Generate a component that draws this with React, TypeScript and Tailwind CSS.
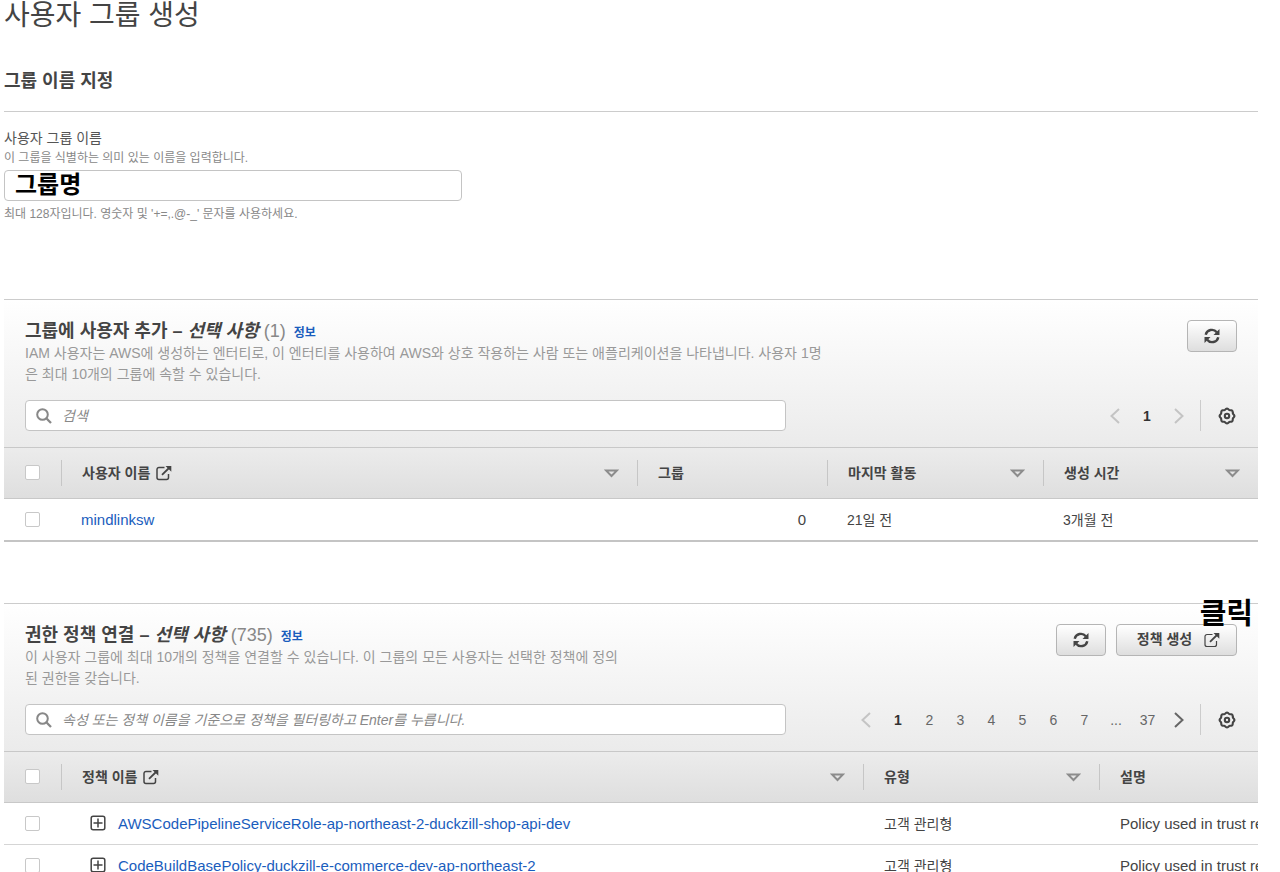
import React from "react";

const ICON = "block shrink-0";

function RefreshIcon() {
  return (
    <svg className={ICON} width="16" height="16" viewBox="0 0 16 16" fill="none" aria-hidden="true">
      <path d="M1.7 6.800A6.300 6.300 0 0 1 12.800 4.300" stroke="#444" strokeWidth="2.400" />
      <path d="M14.300 9.200A6.300 6.300 0 0 1 3.200 11.700" stroke="#444" strokeWidth="2.400" />
      <path d="M15.500 1V7H9.500z" fill="#444" />
      <path d="M0.500 15V9h6z" fill="#444" />
    </svg>
  );
}

function ExternalIcon({ light = false }: { light?: boolean }) {
  return (
    <svg className={ICON} width="16" height="16" viewBox="0 0 16 16" fill="none" stroke="#444" aria-hidden="true">
      <path
        d="M8.500 2.500H3A2 2 0 0 0 1 4.500V12.500A2 2 0 0 0 3 14.500H10.500A2 2 0 0 0 12.500 12.500V9"
        strokeWidth={light ? 1.2 : 1.5}
      />
      <path d="M6 9.800 13 3" strokeWidth="1.800" />
      <path d="M9.500 1H15.300V6.800z" fill="#444" stroke="none" />
    </svg>
  );
}

function SearchIcon() {
  return (
    <svg className={ICON} width="16" height="16" viewBox="0 0 16 16" fill="none" stroke="#888" strokeWidth="2" aria-hidden="true">
      <circle cx="6.500" cy="6.500" r="5.300" />
      <path d="M10.300 10.300 15 15" strokeWidth="2.300" />
    </svg>
  );
}

function SortIcon() {
  return (
    <svg className={ICON} width="15" height="9" viewBox="0 0 15 9" fill="none" stroke="#8c8c8c" strokeWidth="2" aria-hidden="true">
      <path d="M2 1.400H13L7.500 7z" />
    </svg>
  );
}

function PlusBoxIcon() {
  return (
    <svg className={ICON} width="16" height="16" viewBox="0 0 16 16" fill="none" stroke="#444" strokeWidth="1.500" aria-hidden="true">
      <rect x="1.200" y="1.200" width="13.600" height="13.600" rx="2" />
      <path d="M8 3.500V12.500M3.500 8H12.500" />
    </svg>
  );
}

const gearOutline = Array.from({ length: 96 }, (_, i) => {
  const a = (i / 96) * Math.PI * 2;
  const r = 6.9 + 0.5 * Math.cos(a * 8);
  return `${i === 0 ? "M" : "L"}${(9 + r * Math.cos(a)).toFixed(2)} ${(9 + r * Math.sin(a)).toFixed(2)}`;
}).join("");

function GearIcon() {
  return (
    <svg className={ICON} width="18" height="18" viewBox="0 0 18 18" fill="none" stroke="#444" strokeWidth="2.100" aria-hidden="true">
      <path d={`${gearOutline}Z`} />
      <circle cx="9" cy="9" r="2.200" />
    </svg>
  );
}

function Chevron({ dir, active = false }: { dir: "left" | "right"; active?: boolean }) {
  return (
    <svg
      className={ICON}
      width="10"
      height="16"
      viewBox="0 0 10 16"
      fill="none"
      stroke={active ? "#666" : "#c4c4c4"}
      strokeWidth="2"
      aria-hidden="true"
    >
      <path d={dir === "left" ? "M9 1 1.500 8 9 15" : "M1 1 8.500 8 1 15"} />
    </svg>
  );
}

function Check({ label }: { label: string }) {
  return (
    <input
      type="checkbox"
      aria-label={label}
      className="block size-[15px] appearance-none rounded-xs border border-[#c8c8c8] bg-white"
    />
  );
}

const BUTTON =
  "flex h-8 items-center justify-center rounded border border-[#b5b5b5] bg-linear-to-b from-white to-[#dedede] text-sm font-bold text-[#444]";

function RefreshButton() {
  return (
    <button type="button" aria-label="새로 고침" className={`${BUTTON} w-[50px]`}>
      <RefreshIcon />
    </button>
  );
}

function Pagination({ pages, hasNext }: { pages: string[]; hasNext: boolean }) {
  return (
    <nav className="flex items-center text-sm text-[#666]">
      <button type="button" aria-label="이전 페이지" className="flex w-8 justify-center">
        <Chevron dir="left" />
      </button>
      {pages.map((p, i) =>
        p === "..." ? (
          <span key={p} className="w-8 text-center">
            {p}
          </span>
        ) : (
          <button key={p} type="button" className={i === 0 ? "w-8 font-bold text-[#333]" : "w-[31px]"}>
            {p}
          </button>
        ),
      )}
      <button type="button" aria-label="다음 페이지" className="flex w-[31px] justify-center">
        <Chevron dir="right" active={hasNext} />
      </button>
    </nav>
  );
}

interface PanelProps {
  title: string;
  count: number;
  description: string;
  descriptionClass: string;
  placeholder: string;
  pages: string[];
  hasNext: boolean;
  actions: React.ReactNode;
  children: React.ReactNode;
}

function Panel(props: PanelProps) {
  return (
    <section className="border-t border-[#ccc]">
      <div className="bg-linear-to-b from-white to-[#ebebeb] px-[21px] pt-5 pb-4">
        <div className="flex h-20 items-start justify-between">
          <div>
            <div className="flex items-baseline">
              <h2 className="text-lg leading-[23px] font-bold text-[#444]">
                {props.title} – <em>선택 사항</em> <span className="font-normal text-[#888]">({props.count})</span>
              </h2>
              <a href="#info" className="ml-2 text-xs font-bold text-[#1a5dbd]">
                정보
              </a>
            </div>
            <p className={`text-sm leading-[21px] text-[#999] ${props.descriptionClass}`}>{props.description}</p>
          </div>
          <div className="flex gap-2.5">{props.actions}</div>
        </div>
        <div className="flex items-center justify-between">
          <label className="flex h-[31px] w-full max-w-[761px] items-center gap-2.5 rounded border border-[#c4c4c4] bg-white px-2.5">
            <SearchIcon />
            <input
              type="search"
              placeholder={props.placeholder}
              aria-label={props.placeholder}
              className="min-w-0 flex-1 text-sm text-[#444] outline-none placeholder:text-[#888] placeholder:italic"
            />
          </label>
          <div className="flex items-center">
            <Pagination pages={props.pages} hasNext={props.hasNext} />
            <button
              type="button"
              aria-label="설정"
              className="ml-1.5 flex h-[31px] items-center border-l border-[#ccc] pr-px pl-[17px]"
            >
              <GearIcon />
            </button>
          </div>
        </div>
      </div>
      {props.children}
    </section>
  );
}

interface HeadCellProps {
  label: string;
  width?: string;
  external?: boolean;
  sort?: boolean;
}

function HeadCell({ label, width = "", external = false, sort = false }: HeadCellProps) {
  return (
    <th scope="col" className={`border-y border-[#c8c8c8] p-0 ${width}`}>
      <div className="flex h-[26px] items-center border-l border-[#c6c6c6] pr-[18px] pl-5 text-sm font-bold whitespace-nowrap text-[#444]">
        <span className="mr-1.5">{label}</span>
        {external && <ExternalIcon />}
        {sort && (
          <span className="ml-auto">
            <SortIcon />
          </span>
        )}
      </div>
    </th>
  );
}

function HeadCheck({ label }: { label: string }) {
  return (
    <th className="w-[57px] border-y border-[#c8c8c8] p-0 pb-0.5 pl-[21px]">
      <Check label={label} />
    </th>
  );
}

const TABLE = "w-full table-fixed border-separate border-spacing-0 text-left text-sm text-[#444]";
const HEAD_ROW = "h-[52px] bg-linear-to-b from-[#ececec] to-[#dedede]";
const USER_CELL = "h-[43px] border-b-2 border-[#c4c4c4] p-0 pl-5";
const USER_CHECK = "h-[43px] border-b-2 border-[#c4c4c4] p-0 pl-[21px]";
const POLICY_CELL = "h-[42px] overflow-hidden border-b border-[#d5d5d5] p-0 pl-[21px] whitespace-nowrap";
const POLICY_CHECK = "h-[42px] border-b border-[#d5d5d5] p-0 pl-[21px]";
const LINK = "text-[15px] text-[#1a5dbd]";

const policies = [
  "AWSCodePipelineServiceRole-ap-northeast-2-duckzill-shop-api-dev",
  "CodeBuildBasePolicy-duckzill-e-commerce-dev-ap-northeast-2",
];

export default function App() {
  return (
    <main className="h-screen overflow-hidden bg-white pr-[22px] pl-1 font-['Liberation_Sans','Noto_Sans_CJK_KR',sans-serif] text-[#444]">
      <h1 className="text-[28px] leading-8">사용자 그룹 생성</h1>

      <h2 className="mt-9 border-b border-[#ccc] pb-[17px] text-lg leading-[26px] font-bold">그룹 이름 지정</h2>
      <div className="mt-4 mb-[75px]">
        <label htmlFor="group-name" className="block text-sm leading-5 text-[#555]">
          사용자 그룹 이름
        </label>
        <p className="text-xs leading-5 text-[#888]">이 그룹을 식별하는 의미 있는 이름을 입력합니다.</p>
        <input
          id="group-name"
          defaultValue="그룹명"
          className="mt-0.5 mb-[3px] block h-[31px] w-full max-w-[458px] rounded border border-[#c4c4c4] px-2.5 pb-1.5 text-2xl leading-6 font-bold text-black outline-none"
        />
        <p className="text-xs leading-5 text-[#888]">최대 128자입니다. 영숫자 및 '+=,.@-_' 문자를 사용하세요.</p>
      </div>

      <div className="flex flex-col gap-[61px]">
        <Panel
          title="그룹에 사용자 추가"
          count={1}
          description="IAM 사용자는 AWS에 생성하는 엔터티로, 이 엔터티를 사용하여 AWS와 상호 작용하는 사람 또는 애플리케이션을 나타냅니다. 사용자 1명은 최대 10개의 그룹에 속할 수 있습니다."
          descriptionClass="max-w-[802px]"
          placeholder="검색"
          pages={["1"]}
          hasNext={false}
          actions={<RefreshButton />}
        >
          <table className={TABLE}>
            <thead>
              <tr className={HEAD_ROW}>
                <HeadCheck label="모든 사용자 선택" />
                <HeadCell label="사용자 이름" external sort />
                <HeadCell label="그룹" width="w-[190px]" />
                <HeadCell label="마지막 활동" width="w-[216px]" sort />
                <HeadCell label="생성 시간" width="w-[215px]" sort />
              </tr>
            </thead>
            <tbody>
              <tr>
                <td className={USER_CHECK}>
                  <Check label="mindlinksw 선택" />
                </td>
                <td className={USER_CELL}>
                  <a href="#mindlinksw" className={LINK}>
                    mindlinksw
                  </a>
                </td>
                <td className={`${USER_CELL} pr-[21px] text-right text-[15px]`}>0</td>
                <td className={USER_CELL}>21일 전</td>
                <td className={USER_CELL}>3개월 전</td>
              </tr>
            </tbody>
          </table>
        </Panel>

        <Panel
          title="권한 정책 연결"
          count={735}
          description="이 사용자 그룹에 최대 10개의 정책을 연결할 수 있습니다. 이 그룹의 모든 사용자는 선택한 정책에 정의된 권한을 갖습니다."
          descriptionClass="max-w-[598px]"
          placeholder="속성 또는 정책 이름을 기준으로 정책을 필터링하고 Enter를 누릅니다."
          pages={["1", "2", "3", "4", "5", "6", "7", "...", "37"]}
          hasNext
          actions={
            <>
              <RefreshButton />
              <div className="relative">
                <button type="button" className={`${BUTTON} w-[121px] gap-3 pl-1`}>
                  <span className="pb-0.5">정책 생성</span>
                  <ExternalIcon light />
                </button>
                <strong className="absolute -top-6 -right-4 text-[29px] leading-7 whitespace-nowrap text-black">
                  클릭
                </strong>
              </div>
            </>
          }
        >
          <table className={TABLE}>
            <thead>
              <tr className={HEAD_ROW}>
                <HeadCheck label="모든 정책 선택" />
                <HeadCell label="정책 이름" external sort />
                <HeadCell label="유형" width="w-[236px]" sort />
                <HeadCell label="설명" width="w-[159px]" />
              </tr>
            </thead>
            <tbody>
              {policies.map((name) => (
                <tr key={name}>
                  <td className={POLICY_CHECK}>
                    <Check label={`${name} 선택`} />
                  </td>
                  <td className={POLICY_CELL}>
                    <div className="flex items-center gap-3 pl-2">
                      <button type="button" aria-label={`${name} 펼치기`}>
                        <PlusBoxIcon />
                      </button>
                      <a href={`#${name}`} className={LINK}>
                        {name}
                      </a>
                    </div>
                  </td>
                  <td className={POLICY_CELL}>고객 관리형</td>
                  <td className={`${POLICY_CELL} text-[15px]`}>Policy used in trust re</td>
                </tr>
              ))}
            </tbody>
          </table>
        </Panel>
      </div>
    </main>
  );
}
